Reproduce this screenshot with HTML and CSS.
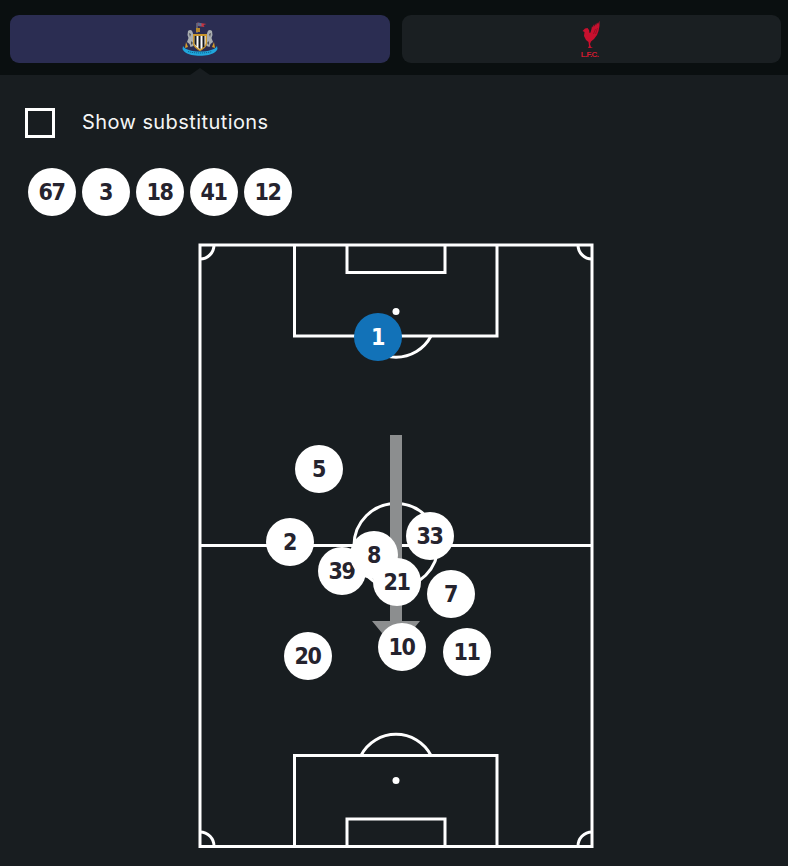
FILE: index.html
```html
<!DOCTYPE html>
<html lang="en">
<head>
<meta charset="utf-8">
<title>Lineup</title>
<link rel="stylesheet" href="styles.css">
</head>
<body>
<header class="tabs">
  <button class="tab tab-active" type="button" aria-label="Newcastle United">
    <svg class="crest" width="36" height="36" viewBox="0 0 36 36">
      <path d="M15 2v10" stroke="#7d8288" stroke-width="1.2"/>
      <path d="M15.5 1.5l9 1.5-3 1 1 2-7-1z" fill="#c9343f"/>
      <path d="M15.5 1.5l4 .7v3l-4-.5z" fill="#5a6f92"/>
      <path d="M14 7h4v4h-4z" fill="#b88a2c"/>
      <path d="M6 10c2-2 4-1 4.500 1l1 3 1.500 2-1.500 9-3 1-1-3-2.500-2 1.500-4-1-3z" fill="#a9adb0"/>
      <path d="M30 10c-2-2-4-1-4.500 1l-1 3-1.500 2 1.500 9 3 1 1-3 2.500-2-1.500-4 1-3z" fill="#a9adb0"/>
      <path d="M7 12l2 1-1 3zM29 12l-2 1 1 3zM9 20l2 2-2 2zM27 20l-2 2 2 2z" fill="#4b4f55"/>
      <path d="M4 21l2 5-3 1zM32 21l-2 5 3 1z" fill="#d59b2a"/>
      <path d="M11 13h14v9c0 4-4 6.500-7 8-3-1.500-7-4-7-8z" fill="#c9962c"/>
      <path d="M12.500 15h11v7c0 3-3 5-5.500 6.500-2.500-1.500-5.500-3.500-5.500-6.500z" fill="#fff"/>
      <path d="M12.500 15h2v10.500l-2-3zM16.500 15h2v13.300l-2-1.200zM20.500 15h2v10.500l-2 1.500z" fill="#15171b"/>
      <path d="M1 25c1 2 3 3 6 4 3 1 7 1.500 11 1.500S26 30 29 29c3-1 5-2 6-4l.500 3c-1 3-5 5-9 6-5 1-12 1-17 0-4-1-8-3-9-6z" fill="#20a6dc"/>
      <path d="M6 30.500c3 1 8 1.500 12 1.500s9-.5 12-1.500" fill="none" stroke="#0d5f86" stroke-width=".9" stroke-dasharray="1.200 .8"/>
    </svg>
  </button>
  <button class="tab" type="button" aria-label="Liverpool">
    <svg class="crest" width="24" height="36" viewBox="0 0 24 36">
      <path d="M3.500 10L6 7.500 8.500 7 10 9l.5 3 1-.5 1-3.500.5-3 1 1.500.5-3 1 2 .5-3 1 2 1-3 1 1.500 1.500-3.200V5l-1 5-1.500 4-3 4-3 2.500-1 2.500 1 3 2 1H9l1-2-.5-4L7 19l-2-4 .5-4z" fill="#c8102e"/>
      <path d="M14.500 13l2-5M16.500 13l2-6" stroke="#7d0b1e" stroke-width=".6" fill="none"/>
      <text class="lfc" x="10.500" y="35.500" text-anchor="middle">L.F.C.</text>
    </svg>
  </button>
</header>
<main class="panel">
  <label class="toggle">
    <span class="box"></span>
    <span class="toggle-text">Show substitutions</span>
  </label>
  <ul class="subs">
    <li class="num">67</li>
    <li class="num">3</li>
    <li class="num">18</li>
    <li class="num">41</li>
    <li class="num">12</li>
  </ul>
  <section class="pitch">
    <svg class="lines" width="396" height="606" viewBox="198 243 396 606">
      <g fill="none" stroke="#fff" stroke-width="3">
        <rect x="200" y="245" width="392" height="601.500"/>
        <path d="M200 545.500H592"/>
        <circle cx="396" cy="545.500" r="42"/>
        <path d="M294.500 245V336H497V245"/>
        <path d="M347 245V272.500H445V245"/>
        <path d="M361 336A39.500 39.500 0 0 0 431 336"/>
        <path d="M294.500 846.500V755.500H497V846.500"/>
        <path d="M347 846.500V819H445V846.500"/>
        <path d="M361 755.500A39.500 39.500 0 0 1 431 755.500"/>
        <path d="M200 259A14 14 0 0 0 214 245"/>
        <path d="M578 245A14 14 0 0 0 592 259"/>
        <path d="M200 832A14 14 0 0 1 214 846.500"/>
        <path d="M578 846.500A14 14 0 0 1 592 832"/>
      </g>
      <circle cx="396" cy="311.500" r="3.500" fill="#fff"/>
      <circle cx="396" cy="780.500" r="3.500" fill="#fff"/>
      <path d="M390 435H402V621H420L396 650L372 621H390Z" fill="#8c8e8f"/>
    </svg>
    <span class="num player keeper" style="left:156px;top:70px">1</span>
    <span class="num player" style="left:97px;top:202px">5</span>
    <span class="num player" style="left:68px;top:275px">2</span>
    <span class="num player" style="left:120px;top:304px">39</span>
    <span class="num player" style="left:152px;top:288px">8</span>
    <span class="num player" style="left:208px;top:269px">33</span>
    <span class="num player" style="left:175px;top:315px">21</span>
    <span class="num player" style="left:229px;top:327px">7</span>
    <span class="num player" style="left:86px;top:389px">20</span>
    <span class="num player" style="left:180px;top:380px">10</span>
    <span class="num player" style="left:245px;top:385px">11</span>
  </section>
</main>
</body>
</html>
```
FILE: styles.css
```css
* { box-sizing: border-box; }
html, body { margin: 0; padding: 0; }
body {
  background: #181d20;
  color: #fff;
  font-family: Inter, "Liberation Sans", sans-serif;
  width: 788px;
  height: 866px;
  overflow: hidden;
}
.tabs {
  display: flex;
  gap: 12px;
  height: 75px;
  padding: 15px 7px 12px 10px;
  background: #0a0f10;
  position: relative;
}
.tab {
  flex: 1;
  height: 48px;
  display: flex;
  align-items: center;
  justify-content: center;
  padding: 0;
  border: 0;
  border-radius: 9px;
  background: #1a1f22;
}
.tab-active { background: #2b2d52; }
.tab-active::after {
  content: "";
  position: absolute;
  left: 190px;
  bottom: 0;
  border-left: 10px solid transparent;
  border-right: 10px solid transparent;
  border-bottom: 7px solid #181d20;
}
.crest { display: block; overflow: visible; }
.lfc { font: 700 8px "Liberation Sans", sans-serif; letter-spacing: -0.6px; fill: #d01a30; }
.panel { padding: 33px 0 0 25px; }
.toggle { display: flex; align-items: center; gap: 27px; height: 30px; }
.box { width: 30px; height: 30px; border: 3px solid #fff; }
.toggle-text { font-size: 20px; letter-spacing: 0.42px; color: #f4f5f5; padding-bottom: 2px; }
.subs {
  display: flex;
  gap: 6px;
  list-style: none;
  margin: 30px 0 0 3px;
  padding: 0;
}
.num {
  width: 48px;
  height: 48px;
  display: flex;
  align-items: center;
  justify-content: center;
  padding: 0 1px 1px 0;
  border-radius: 50%;
  background: #fff;
  color: #25232e;
  font-family: "DejaVu Sans Condensed", "DejaVu Sans", sans-serif;
  font-weight: 700;
  font-size: 23px;
  letter-spacing: -1.5px;
}
.pitch {
  position: relative;
  width: 396px;
  height: 606px;
  margin: 27px 0 0 173px;
}
.lines { display: block; }
.player { position: absolute; }
.keeper { background: #1272b8; color: #fff; }
```
